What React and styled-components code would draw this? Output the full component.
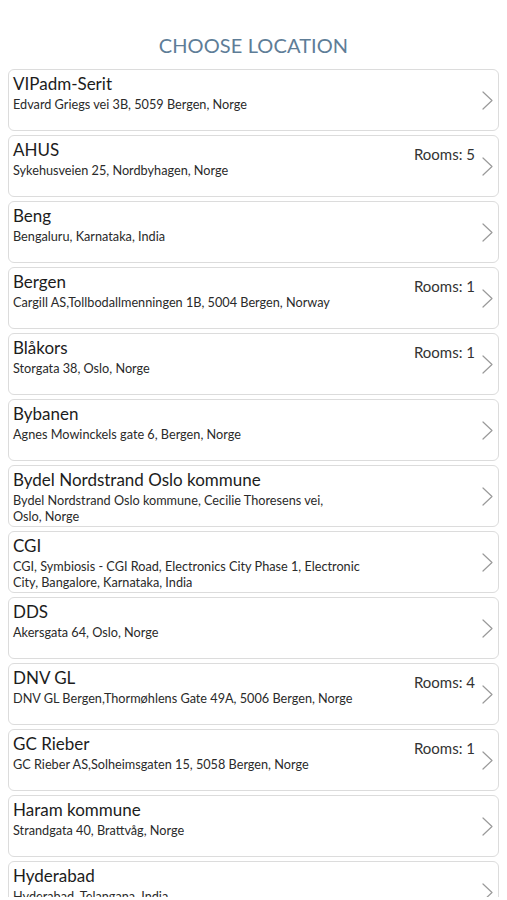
import React from "react";
import styled, { createGlobalStyle } from "styled-components";

const Global = createGlobalStyle`
  html, body { margin: 0; padding: 0; background: #ffffff; }
  body { font-family: "Lato", "Noto Sans", sans-serif; -webkit-font-smoothing: antialiased; }
`;

const Screen = styled.div`
  width: 507px;
  height: 897px;
  overflow: hidden;
  background: #fff;
`;

const Title = styled.h1`
  margin: 0;
  padding-top: 33px;
  height: 36px;
  text-align: center;
  font-family: "Lato", sans-serif;
  font-weight: 400;
  font-size: 20px;
  line-height: 24px;
  letter-spacing: 0.1px;
  color: #5e7d97;
`;

const List = styled.ul`
  list-style: none;
  margin: 0;
  padding: 0 8px;
  display: flex;
  flex-direction: column;
  gap: 4px;
`;

const Card = styled.li`
  box-sizing: border-box;
  height: 62px;
  flex-shrink: 0;
  border: 1px solid #dcdcdc;
  border-radius: 6px;
  padding: 3px 5px 3px 4px;
  display: grid;
  grid-template-columns: 1fr auto 18px;
  align-items: start;
`;

const Info = styled.div`
  display: flex;
  flex-direction: column;
  min-width: 0;
`;

const Name = styled.div`
  font-size: 17px;
  line-height: 22px;
  color: #1c1c1c;
`;

const Address = styled.div`
  margin-top: 1px;
  font-size: 12.7px;
  line-height: 16px;
  color: #2a2a2a;
  white-space: pre-line;
`;

const Rooms = styled.div`
  font-size: 15px;
  line-height: 20px;
  color: #333;
  padding-top: 5px;
  white-space: nowrap;
`;

const Chevron = styled.svg`
  align-self: center;
  justify-self: end;
  width: 11px;
  height: 19px;
`;

const locations = [
  { name: "VIPadm-Serit", address: "Edvard Griegs vei 3B, 5059 Bergen, Norge" },
  { name: "AHUS", address: "Sykehusveien 25, Nordbyhagen, Norge", rooms: 5 },
  { name: "Beng", address: "Bengaluru, Karnataka, India" },
  { name: "Bergen", address: "Cargill AS,Tollbodallmenningen 1B, 5004 Bergen, Norway", rooms: 1 },
  { name: "Blåkors", address: "Storgata 38, Oslo, Norge", rooms: 1 },
  { name: "Bybanen", address: "Agnes Mowinckels gate 6, Bergen, Norge" },
  { name: "Bydel Nordstrand Oslo kommune", address: "Bydel Nordstrand Oslo kommune, Cecilie Thoresens vei,\nOslo, Norge" },
  { name: "CGI", address: "CGI, Symbiosis - CGI Road, Electronics City Phase 1, Electronic\nCity, Bangalore, Karnataka, India" },
  { name: "DDS", address: "Akersgata 64, Oslo, Norge" },
  { name: "DNV GL", address: "DNV GL Bergen,Thormøhlens Gate 49A, 5006 Bergen, Norge", rooms: 4 },
  { name: "GC Rieber", address: "GC Rieber AS,Solheimsgaten 15, 5058 Bergen, Norge", rooms: 1 },
  { name: "Haram kommune", address: "Strandgata 40, Brattvåg, Norge" },
  { name: "Hyderabad", address: "Hyderabad, Telangana, India" },
];

export default function App() {
  return (
    <>
      <Global />
      <Screen>
        <Title>CHOOSE LOCATION</Title>
        <List>
          {locations.map((l) => (
            <Card key={l.name}>
              <Info>
                <Name>{l.name}</Name>
                <Address>{l.address}</Address>
              </Info>
              <Rooms>{l.rooms != null ? `Rooms: ${l.rooms}` : ""}</Rooms>
              <Chevron viewBox="0 0 11 19">
                <path d="M1 1 L10 9.5 L1 18" fill="none" stroke="#9a9a9a" strokeWidth="1.2" strokeLinecap="round" strokeLinejoin="round" />
              </Chevron>
            </Card>
          ))}
        </List>
      </Screen>
    </>
  );
}
